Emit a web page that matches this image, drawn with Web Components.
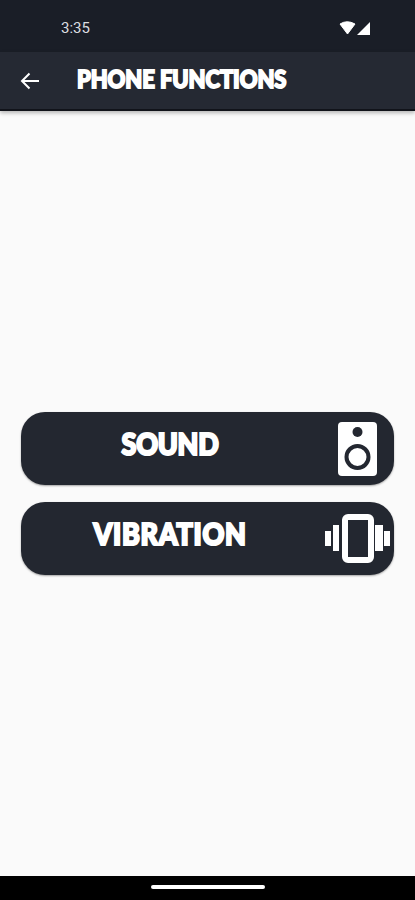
<!doctype html>
<html><head><meta charset="utf-8"><style>
html,body{margin:0;padding:0;height:100%;background:#fafafa}
</style></head><body>
<template id="t-status"><style>
:host{display:flex;box-sizing:border-box;height:52px;background:#1a1e27;align-items:flex-start;padding:20px 44px 0 61px;justify-content:space-between;color:#dcdde0;font:15px/17px Roboto,sans-serif}
svg{display:block;margin-top:0}
</style><span>3:35</span><svg width="32" height="17" viewBox="0 0 32 17"><path d="M1 4Q8-.5 16 4L8.500 14Z" fill="#fff" stroke="#fff" stroke-linejoin="round"/><path d="M31 2V15H18Z" fill="#fff"/></svg></template>
<template id="t-bar"><style>
:host{display:flex;box-sizing:border-box;height:59px;background:#252933;border-bottom:2px solid #11131a;box-shadow:0 2px 4px rgba(0,0,0,.28);align-items:center;padding:0 0 3px 20px;position:relative;z-index:1}
svg{display:block;margin-top:3px}
h1{margin:0 0 0 37px;font:900 22px/30px Lato,sans-serif;color:#fff;letter-spacing:-.1px;-webkit-text-stroke:1.700px #fff;text-shadow:0 1px 1px #000;white-space:nowrap;transform:scaleY(1.08)}
</style><svg width="20" height="20" viewBox="0 0 20 20" fill="none" stroke="#fff" stroke-width="2"><path d="M19 10H2M9.500 2.500 2 10l7.500 7.500"/></svg><h1><slot></slot></h1></template>
<template id="t-btn"><style>
:host{display:flex;height:73px;border-radius:24px;background:#232730;box-shadow:0 1px 2px rgba(0,0,0,.35);align-items:center;position:relative}
.l{width:298px;text-align:center;padding-bottom:9px;box-sizing:border-box;font:900 27px/32px Lato,sans-serif;color:#fff;letter-spacing:var(--ls,0);-webkit-text-stroke:2px #fff;text-shadow:0 1px 1px #000;transform:scaleY(1.12)}
.i{flex:1;display:flex;justify-content:center;min-width:0}
</style><div class="l"><slot></slot></div><div class="i"><slot name="icon"></slot></div></template>
<template id="t-nav"><style>
:host{display:flex;height:24px;background:#000;justify-content:center;padding-top:9px;box-sizing:border-box}
i{display:block;width:114px;height:4px;background:#fff;border-radius:2px}
</style><i></i></template>
<template id="t-app"><style>
:host{display:flex;flex-direction:column;height:900px;background:#fafafa}
main{flex:1;display:flex;flex-direction:column;justify-content:center;gap:17px;padding:0 21px;box-sizing:border-box}
</style><slot name="top"></slot><main><slot></slot></main><slot name="bottom"></slot></template>
<phone-app>
<status-bar slot="top"></status-bar>
<app-bar slot="top">PHONE FUNCTIONS</app-bar>
<func-button style="--ls:-.3px">SOUND
<svg slot="icon" style="display:block;margin-left:1px" width="39" height="54" viewBox="0 0 39 54"><rect width="39" height="54" rx="4" fill="#fff"/><circle cx="19.500" cy="10" r="5" fill="#232730"/><circle cx="19.500" cy="35" r="11" fill="none" stroke="#232730" stroke-width="4"/></svg></func-button>
<func-button style="--ls:.7px">VIBRATION
<svg slot="icon" style="display:block;margin-left:1px" width="65" height="50" viewBox="0 0 65 50"><path d="M0 17h6v15H0zM8 11h6v26H8zM50 11h8v26h-8zM59 17h6v15h-6z" fill="#fff"/><rect x="20" y="3" width="26" height="43" rx="3" fill="none" stroke="#fff" stroke-width="6"/></svg></func-button>
<nav-pill slot="bottom"></nav-pill>
</phone-app>
<script>
const def=(n,t)=>customElements.define(n,class extends HTMLElement{constructor(){super();this.attachShadow({mode:'open'}).appendChild(document.getElementById(t).content.cloneNode(true))}});
def('status-bar','t-status');def('app-bar','t-bar');def('func-button','t-btn');def('nav-pill','t-nav');def('phone-app','t-app');
</script>
</body></html>
